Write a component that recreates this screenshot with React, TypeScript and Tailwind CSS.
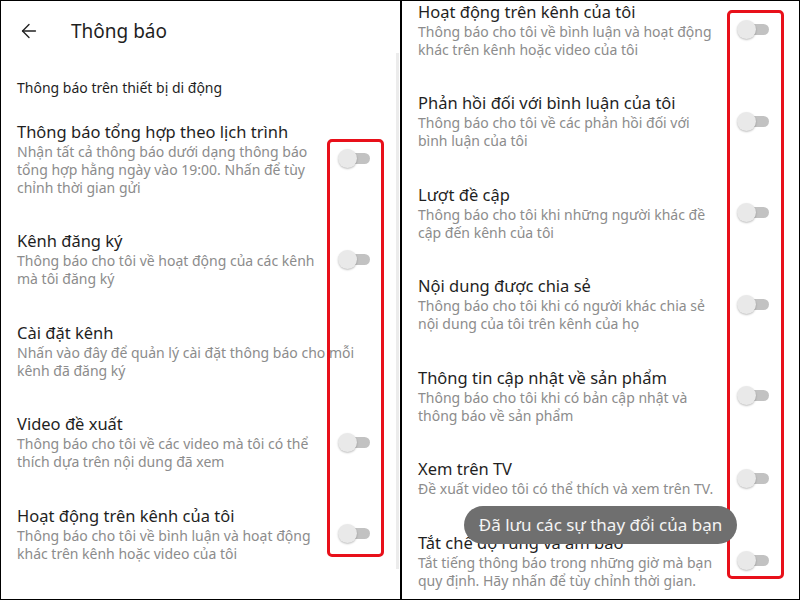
import {ArrowLeft} from 'lucide-react';

interface Setting {
  title: string;
  desc: string[];
  toggle?: boolean;
}

const mobileSettings: Setting[] = [
  {
    title: 'Thông báo tổng hợp theo lịch trình',
    desc: [
      'Nhận tất cả thông báo dưới dạng thông báo',
      'tổng hợp hằng ngày vào 19:00. Nhấn để tùy',
      'chỉnh thời gian gửi',
    ],
    toggle: true,
  },
  {
    title: 'Kênh đăng ký',
    desc: ['Thông báo cho tôi về hoạt động của các kênh', 'mà tôi đăng ký'],
    toggle: true,
  },
  {
    title: 'Cài đặt kênh',
    desc: ['Nhấn vào đây để quản lý cài đặt thông báo cho mỗi', 'kênh đã đăng ký'],
  },
  {
    title: 'Video đề xuất',
    desc: ['Thông báo cho tôi về các video mà tôi có thể', 'thích dựa trên nội dung đã xem'],
    toggle: true,
  },
  {
    title: 'Hoạt động trên kênh của tôi',
    desc: ['Thông báo cho tôi về bình luận và hoạt động', 'khác trên kênh hoặc video của tôi'],
    toggle: true,
  },
  {
    title: 'Phản hồi đối với bình luận của tôi',
    desc: ['Thông báo cho tôi về các phản hồi đối với', 'bình luận của tôi'],
    toggle: true,
  },
];

const channelSettings: Setting[] = [
  {
    title: 'Hoạt động trên kênh của tôi',
    desc: ['Thông báo cho tôi về bình luận và hoạt động', 'khác trên kênh hoặc video của tôi'],
    toggle: true,
  },
  {
    title: 'Phản hồi đối với bình luận của tôi',
    desc: ['Thông báo cho tôi về các phản hồi đối với', 'bình luận của tôi'],
    toggle: true,
  },
  {
    title: 'Lượt đề cập',
    desc: ['Thông báo cho tôi khi những người khác đề', 'cập đến kênh của tôi'],
    toggle: true,
  },
  {
    title: 'Nội dung được chia sẻ',
    desc: ['Thông báo cho tôi khi có người khác chia sẻ', 'nội dung của tôi trên kênh của họ'],
    toggle: true,
  },
  {
    title: 'Thông tin cập nhật về sản phẩm',
    desc: ['Thông báo cho tôi khi có bản cập nhật và', 'thông báo về sản phẩm'],
    toggle: true,
  },
  {
    title: 'Xem trên TV',
    desc: ['Đề xuất video tôi có thể thích và xem trên TV.'],
    toggle: true,
  },
  {
    title: 'Tắt chế độ rung và âm báo',
    desc: ['Tắt tiếng thông báo trong những giờ mà bạn', 'quy định. Hãy nhấn để tùy chỉnh thời gian.'],
    toggle: true,
  },
];

function Toggle() {
  return (
    <div className="relative w-[32px] h-[19px] shrink-0">
      <div className="absolute left-[6px] right-0 top-[4px] h-[11px] rounded-full bg-[#c2c2c2]" />
      <div className="absolute left-0 top-0 w-[19px] h-[19px] rounded-full bg-[#e9e9e9] shadow-[0_1px_2px_rgba(0,0,0,0.25)]" />
    </div>
  );
}

function SettingRow({setting}: {setting: Setting}) {
  return (
    <div className="flex items-center py-[16.75px] pl-4 pr-[30px]">
      <div className="flex-1 min-w-0">
        <div className="text-[16.5px] leading-[22px] text-[#1f1f1f] whitespace-nowrap">
          {setting.title}
        </div>
        <div className="text-[14px] leading-[18px] text-[#8c8c8c]">
          {setting.desc.map(line => (
            <div key={line} className="whitespace-nowrap">
              {line}
            </div>
          ))}
        </div>
      </div>
      {setting.toggle && <Toggle />}
    </div>
  );
}

export default function App() {
  return (
    <div className="w-[800px] h-[600px] flex border border-black bg-white overflow-hidden font-['Noto_Sans','Open_Sans',sans-serif]">
      {/* left phone: top of the notification settings */}
      <div className="relative w-[399px] h-full overflow-hidden">
        <div className="flex items-center h-[60px] pl-[17px]">
          <ArrowLeft size={22} strokeWidth={1.5} className="text-[#222]" />
          <div className="ml-[31px] text-[19px] text-[#1f1f1f]">Thông báo</div>
        </div>
        <div className="mt-[17px] mb-[6px] pl-4 text-[14px] leading-[20px] text-[#1f1f1f]">
          Thông báo trên thiết bị di động
        </div>
        {mobileSettings.map(s => (
          <SettingRow key={s.title} setting={s} />
        ))}
        <div className="absolute right-[1px] top-[52px] w-[3px] h-[516px] bg-[#ececec]" />
        <div className="absolute left-[326px] top-[138px] w-[57px] h-[418px] border-[3px] border-[#e8101a] rounded-[5px]" />
      </div>

      <div className="w-[2px] h-full bg-black" />

      {/* right phone: scrolled further down */}
      <div className="relative flex-1 h-full overflow-hidden">
        <div className="-mt-[17px]">
          {channelSettings.map(s => (
            <SettingRow key={s.title} setting={s} />
          ))}
        </div>
        <div className="absolute left-[325px] top-[9px] w-[57px] h-[569px] border-[3px] border-[#e8101a] rounded-[5px]" />
        <div className="absolute left-[62px] top-[505px] w-[273px] h-[38px] rounded-full bg-[#6f6f6f] flex items-center justify-center text-[17px] text-[#f4f4f4]">
          Đã lưu các sự thay đổi của bạn
        </div>
      </div>
    </div>
  );
}
